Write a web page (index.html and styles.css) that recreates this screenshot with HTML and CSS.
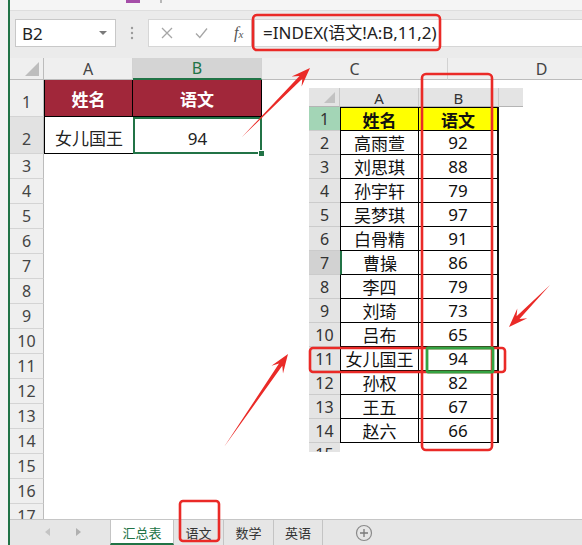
FILE: index.html
```html
<!DOCTYPE html>
<html lang="zh-CN">
<head>
<meta charset="utf-8">
<title>INDEX</title>
<link rel="stylesheet" href="styles.css">
</head>
<body>
<div class="app">
  <div class="edge"></div>
  <div class="main">
    <div class="titlebar"><span class="tb-mark"></span><span class="tb-dot"></span></div>
    <div class="toolbar">
      <div class="namebox"><span>B2</span><span class="caret"></span></div>
      <div class="dots">
        <svg width="4" height="14" viewBox="0 0 4 14"><circle cx="2" cy="2" r="1.2" fill="#9a9a9a"/><circle cx="2" cy="7" r="1.2" fill="#9a9a9a"/><circle cx="2" cy="12" r="1.2" fill="#9a9a9a"/></svg>
      </div>
      <div class="fxbox">
        <svg class="ic-x" width="12" height="12" viewBox="0 0 12 12"><path d="M1 1L11 11M11 1L1 11" stroke="#a6a6a6" stroke-width="1.3" fill="none"/></svg>
        <svg class="ic-ok" width="13" height="12" viewBox="0 0 13 12"><path d="M1 6.5L4.8 10.5L12 1.5" stroke="#a6a6a6" stroke-width="1.3" fill="none"/></svg>
        <span class="fx"><i>f</i><span class="fxx">x</span></span>
      </div>
      <div class="formula">=INDEX(语文!A:B,11,2)</div>
    </div>
    <div class="sheet">
      <div class="ch corner"><svg width="14" height="14" viewBox="0 0 14 14"><polygon points="14,0 14,14 0,14" fill="#bdbdbd"/></svg></div>
      <div class="ch">A</div>
      <div class="ch sel">B</div>
      <div class="ch">C</div>
      <div class="ch">D</div>

      <div class="rh tall">1</div>
      <div class="c hdr a1">姓名</div>
      <div class="c hdr b1">语文</div>
      <div class="c"></div>
      <div class="c"></div>

      <div class="rh tall rsel">2</div>
      <div class="c a2">女儿国王</div>
      <div class="c b2">94<span class="handle"></span></div>
      <div class="c"></div>
      <div class="c"></div>

      <div class="rh">3</div><div class="blank"></div>
      <div class="rh">4</div><div class="blank"></div>
      <div class="rh">5</div><div class="blank"></div>
      <div class="rh">6</div><div class="blank"></div>
      <div class="rh">7</div><div class="blank"></div>
      <div class="rh">8</div><div class="blank"></div>
      <div class="rh">9</div><div class="blank"></div>
      <div class="rh">10</div><div class="blank"></div>
      <div class="rh">11</div><div class="blank"></div>
      <div class="rh">12</div><div class="blank"></div>
      <div class="rh">13</div><div class="blank"></div>
      <div class="rh">14</div><div class="blank"></div>
      <div class="rh">15</div><div class="blank"></div>
      <div class="rh">16</div><div class="blank"></div>
      <div class="rh">17</div><div class="blank"></div>
    </div>
    <div class="tabs">
      <div class="tab-nav">
        <svg width="100" height="25" viewBox="0 0 100 25"><polygon points="40,8 40,16 35,12" fill="#c4c4c4"/><polygon points="66,8 66,16 71,12" fill="#b0b0b0"/></svg>
      </div>
      <div class="tab active">汇总表</div>
      <div class="tab w50">语文</div>
      <div class="tab w50">数学</div>
      <div class="tab w49">英语</div>
      <div class="addtab">
        <svg width="18" height="18" viewBox="0 0 18 18"><circle cx="9" cy="9" r="7.5" stroke="#8a8a8a" stroke-width="1.2" fill="none"/><path d="M9 5V13M5 9H13" stroke="#7a7a7a" stroke-width="1.3"/></svg>
      </div>
    </div>
  </div>
</div>

<div class="pic">
  <div class="ph corner2"><svg width="11" height="11" viewBox="0 0 11 11"><polygon points="11,0 11,11 0,11" fill="#c2c2c2"/></svg></div>
  <div class="ph">A</div>
  <div class="ph">B</div>
  <div class="ph last"></div>

  <div class="pr g">1</div><div class="pa y top">姓名</div><div class="pb y top">语文</div><div class="pe"></div>
  <div class="pr">2</div><div class="pa">高雨萱</div><div class="pb">92</div><div class="pe"></div>
  <div class="pr">3</div><div class="pa">刘思琪</div><div class="pb">88</div><div class="pe"></div>
  <div class="pr">4</div><div class="pa">孙宇轩</div><div class="pb">79</div><div class="pe"></div>
  <div class="pr">5</div><div class="pa">吴梦琪</div><div class="pb">97</div><div class="pe"></div>
  <div class="pr">6</div><div class="pa">白骨精</div><div class="pb">91</div><div class="pe"></div>
  <div class="pr d">7</div><div class="pa gsel">曹操</div><div class="pb">86</div><div class="pe"></div>
  <div class="pr">8</div><div class="pa">李四</div><div class="pb">79</div><div class="pe"></div>
  <div class="pr">9</div><div class="pa">刘琦</div><div class="pb">73</div><div class="pe"></div>
  <div class="pr">10</div><div class="pa">吕布</div><div class="pb">65</div><div class="pe"></div>
  <div class="pr">11</div><div class="pa">女儿国王</div><div class="pb">94</div><div class="pe"></div>
  <div class="pr">12</div><div class="pa">孙权</div><div class="pb">82</div><div class="pe"></div>
  <div class="pr">13</div><div class="pa">王五</div><div class="pb">67</div><div class="pe"></div>
  <div class="pr">14</div><div class="pa">赵六</div><div class="pb">66</div><div class="pe"></div>
  <div class="pr p15">15</div><div class="pblank"></div>
</div>

<svg class="marks" width="582" height="545" viewBox="0 0 582 545">
  <g fill="none" stroke="#ea2a27" stroke-width="2.6">
    <rect x="253" y="15" width="187" height="35" rx="4"/>
    <rect x="422" y="74" width="70" height="376" rx="4"/>
    <rect x="310" y="348" width="195" height="24" rx="3"/>
    <rect x="180" y="501" width="39" height="40" rx="3"/>
  </g>
  <rect x="427" y="348" width="66" height="24" rx="1" fill="none" stroke="#34a343" stroke-width="2.8"/>
  <g fill="#ea2a27">
    <polygon points="242,137 302.3,78.7 301.6,86.4 310,68 291.7,76.6 299.5,75.9"/>
    <polygon points="224,447 282.3,365.8 283,373.6 288,354 271.5,365.7 279,363.6"/>
    <polygon points="550,285 516.6,316.3 517.3,308.5 509,327 527.3,318.3 519.5,319.1"/>
  </g>
</svg>
</body>
</html>
```

FILE: styles.css
```css
* { box-sizing: border-box; }
html, body { margin: 0; padding: 0; }
body {
  width: 582px;
  height: 545px;
  overflow: hidden;
  position: relative;
  background: #fff;
  font-family: "Noto Sans", "Noto Sans CJK SC", sans-serif;
  color: #222;
}

.app { display: flex; height: 545px; }
.edge { width: 10px; flex: none; background: #f2f2f2; border-right: 2px solid #217346; }
.main { flex: 1; min-width: 0; display: flex; flex-direction: column; }

/* title strip */
.titlebar {
  height: 11px; flex: none;
  background: #f5f5f5;
  border-bottom: 1px solid #dedede;
  display: flex; align-items: flex-start;
}
.tb-mark { display: block; margin-left: 116px; width: 14px; height: 3px; background: #a54ea8; }
.tb-dot { display: block; margin-left: 20px; width: 2px; height: 3px; background: #b8b8b8; }

/* formula toolbar */
.toolbar {
  height: 47px; flex: none;
  background: #ebebeb;
  display: flex; align-items: flex-start;
  padding: 8px 0 0 5px;
}
.namebox {
  width: 101px; height: 28px;
  background: #fff; border: 1px solid #c8c8c8;
  display: flex; align-items: center; justify-content: space-between;
  padding: 0 6px 0 6px;
  font-size: 17px; color: #222;
}
.caret {
  width: 0; height: 0;
  border-left: 4px solid transparent; border-right: 4px solid transparent;
  border-top: 4px solid #7a7a7a;
  margin-right: 2px;
}
.dots { width: 32px; height: 28px; display: flex; align-items: center; justify-content: center; }
.fxbox {
  width: 104px; height: 28px;
  background: #fff; border: 1px solid #d6d6d6;
  display: flex; align-items: center;
}
.ic-x { margin-left: 12px; }
.ic-ok { margin-left: 22px; }
.fx {
  margin-left: 26px;
  font-family: "Liberation Serif", serif;
  color: #555; font-size: 16px; line-height: 1;
}
.fxx { font-size: 11px; font-style: italic; }
.formula {
  flex: 1; height: 28px;
  margin-left: 2px;
  background: #fff; border: 1px solid #d6d6d6; border-right: none;
  padding-left: 8px;
  font-size: 17px; line-height: 26px; color: #222;
  white-space: nowrap; overflow: hidden;
}

/* main sheet grid */
.sheet {
  height: 461px; flex: none;
  overflow: hidden;
  background: #fff;
  display: grid;
  grid-template-columns: 34px 89px 129px 186px 188px;
  grid-template-rows: 22px 37px 37px;
  grid-auto-rows: 25px;
}
.ch {
  background: #efefef;
  border-right: 1px solid #d2d2d2;
  border-bottom: 1px solid #bcbcbc;
  display: flex; align-items: center; justify-content: center;
  font-size: 16px; color: #444;
}
.ch.corner { justify-content: flex-end; align-items: flex-end; padding: 0 4px 3px 0; border-right-color: #bcbcbc; }
.ch.sel { background: #d4d4d4; color: #217346; border-bottom: 2px solid #217346; }
.rh {
  background: #efefef;
  border-right: 1px solid #bcbcbc;
  border-bottom: 1px solid #d4d4d4;
  display: flex; align-items: center; justify-content: center;
  font-size: 16px; color: #444;
}
.rh.tall { align-items: flex-end; padding-bottom: 3px; }
.rh.rsel { background: #e2e2e2; }
.blank { grid-column: span 4; }
.c {
  display: flex; align-items: flex-end; justify-content: center;
  font-size: 17px; padding-bottom: 3px;
}
.c.hdr {
  background: #a1273a; color: #fff; font-weight: bold;
  align-items: center; padding-bottom: 0;
  border-bottom: 1px solid #000;
}
.c.a1 { border-left: 1px solid #000; border-right: 1px solid #000; }
.c.b1 { border-right: 1px solid #000; }
.c.a2 { border-left: 1px solid #000; border-bottom: 1px solid #000; }
.c.b2 { position: relative; border: 2px solid #217346; padding-bottom: 2px; }
.handle {
  position: absolute; right: -5px; bottom: -5px;
  width: 7px; height: 7px;
  background: #217346; border: 1px solid #fff;
}

/* sheet tabs */
.tabs {
  height: 26px; flex: none;
  background: #e6e6e6;
  border-top: 1px solid #c6c6c6;
  display: flex; align-items: stretch;
  font-family: "Noto Sans CJK SC", sans-serif;
  font-size: 13px; color: #333;
}
.tab-nav { width: 100px; display: flex; align-items: center; }
.tab {
  display: flex; align-items: center; justify-content: center;
  border-right: 1px solid #c4c4c4;
}
.tab.active {
  width: 64px; background: #fff; color: #217346;
  border-left: 1px solid #c4c4c4;
  border-bottom: 2px solid #217346;
  padding-top: 1px;
}
.tab.w50 { width: 50px; }
.tab.w49 { width: 49px; }
.addtab { margin-left: 32px; display: flex; align-items: center; }

/* pasted picture of the 语文 sheet */
.pic {
  position: absolute; left: 309px; top: 88px;
  width: 214px; height: 364px;
  overflow: hidden;
  background: #fff;
  display: grid;
  grid-template-columns: 31px 79px 80px 24px;
  grid-template-rows: 19px;
  grid-auto-rows: 24px;
  font-family: "Noto Sans", "Noto Sans CJK SC", sans-serif;
}
.ph {
  background: #e4e4e4;
  border-right: 1px solid #c8c8c8;
  border-bottom: 1px solid #b4b4b4;
  display: flex; align-items: center; justify-content: center;
  font-size: 15px; color: #333; line-height: 18px;
  padding-top: 1px;
}
.ph.corner2 { justify-content: flex-end; align-items: flex-end; padding: 0 4px 3px 0; }
.ph.last { border-right: none; }
.pr {
  background: #e4e4e4;
  border-bottom: 1px solid #cbcbcb;
  display: flex; align-items: center; justify-content: center;
  font-size: 16px; color: #333;
}
.pr.g { background: #a3d5b6; }
.pr.d { background: #d2d2d2; }
.pr.p15 { align-items: flex-start; }
.pa, .pb {
  display: flex; align-items: center; justify-content: center;
  font-size: 17px; color: #111;
  border-bottom: 1px solid #000;
  border-right: 1px solid #000;
}
.pa { border-left: 1px solid #000; }
.pa.gsel { border-left: 2px solid #217346; }
.pb { border-right: 2px solid #111; }
.y { background: #ffff00; font-weight: bold; }
.top { border-top: 1px solid #000; }
.pe { background: #fff; }
.pblank { grid-column: span 3; }

/* annotations */
.marks { position: absolute; left: 0; top: 0; pointer-events: none; }
```
